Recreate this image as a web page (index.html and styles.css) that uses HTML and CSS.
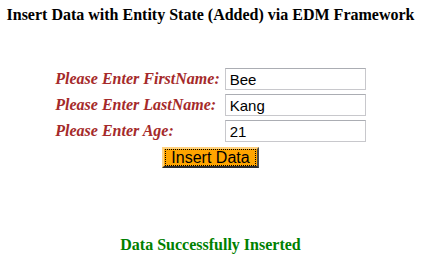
FILE: index.html
```html
<!DOCTYPE html>
<html>
<head>
<meta charset="utf-8">
<link rel="stylesheet" href="styles.css">
</head>
<body>
<h1 class="title">Insert Data with Entity State (Added) via EDM Framework</h1>
<div class="form">
  <label class="lbl">Please Enter FirstName:</label>
  <input class="field" type="text" value="Bee">
  <label class="lbl">Please Enter LastName:</label>
  <input class="field" type="text" value="Kang">
  <label class="lbl">Please Enter Age:</label>
  <input class="field" type="text" value="21">
  <div class="btnrow"><button class="btn"><span class="btntext">Insert Data</span></button></div>
</div>
<p class="msg">Data Successfully Inserted</p>
</body>
</html>
```
FILE: styles.css
```css
html, body { margin: 0; padding: 0; background: #fff; }
body { font-family: "Liberation Serif", "Times New Roman", serif; width: 421px; height: 257px; overflow: hidden; }
.title { margin: 0; padding-top: 5px; text-align: center; font-size: 16px; font-weight: bold; color: #000; line-height: 19px; }
.form { display: grid; grid-template-columns: auto 141px; column-gap: 5px; row-gap: 4px; justify-content: center; align-items: center; margin-top: 44px; }
.lbl { font-style: italic; font-weight: bold; font-size: 16px; color: #a52a2a; }
.field { box-sizing: border-box; width: 141px; height: 22px; margin: 0; border: 1px solid #c8c8cc; border-top-color: #abadb3; padding: 1px 4px; font-family: "Liberation Sans", Arial, sans-serif; font-size: 15px; color: #000; background: #fff; }
.btnrow { grid-column: 1 / 3; display: flex; justify-content: center; margin-top: 1px; }
.btn { box-sizing: border-box; width: 97px; height: 21px; padding: 1px; margin: 0; background: #ffa500; border: 2px outset #ffd27f; border-right-color: #a0a0a0; border-bottom-color: #808080; font-family: "Liberation Sans", Arial, sans-serif; font-size: 16px; color: #000; display: flex; align-items: center; justify-content: center; }
.btntext { display: block; border: 1px dotted #000; padding: 0 2px; line-height: 15px; width: 100%; box-sizing: border-box; }
.msg { margin: 68px 0 0; text-align: center; font-size: 16px; font-weight: bold; color: #008000; }
```
